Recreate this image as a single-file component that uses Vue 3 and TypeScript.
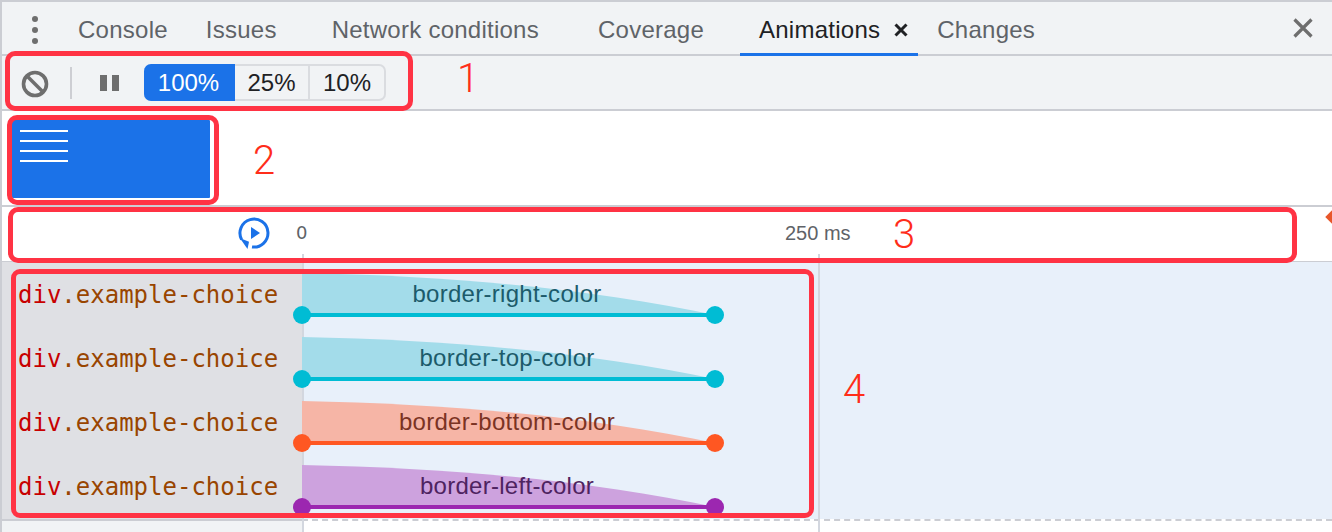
<script setup lang="ts">
interface Tab { label: string; spacer?: number; active?: boolean }
interface Row { prop: string; line: string; fill: string; text: string }

const tabs: Tab[] = [
  { label: 'Console' },
  { label: 'Issues', spacer: 17 },
  { label: 'Network conditions', spacer: 21 },
  { label: 'Coverage', spacer: 17 },
  { label: 'Animations', active: true },
  { label: 'Changes' },
]
const rates = ['100%', '25%', '10%']
const rows: Row[] = [
  { prop: 'border-right-color', line: '#00bcd4', fill: '#a3dcea', text: '#1c5b6b' },
  { prop: 'border-top-color', line: '#00bcd4', fill: '#a3dcea', text: '#1c5b6b' },
  { prop: 'border-bottom-color', line: '#ff5722', fill: '#f6b5a6', text: '#7b3323' },
  { prop: 'border-left-color', line: '#9c27b0', fill: '#cda2de', text: '#4e2360' },
]
const thumbLines = [0, 1, 2, 3]
</script>

<template>
  <div class="devtools">
    <nav class="tabbar">
      <svg class="kebab" width="10" height="30" viewBox="0 0 10 30">
        <circle cx="5" cy="4" r="3" />
        <circle cx="5" cy="15" r="3" />
        <circle cx="5" cy="26" r="3" />
      </svg>
      <div v-for="t in tabs" :key="t.label" class="tab" :class="{ active: t.active }">
        <span>{{ t.label }}</span>
        <span v-if="t.spacer" :style="{ width: t.spacer + 'px' }"></span>
        <svg v-if="t.active" class="tab-x" width="14" height="14" viewBox="0 0 14 14">
          <path d="M1.5 1.5 12.5 12.5M12.5 1.5 1.5 12.5" />
        </svg>
      </div>
      <svg class="close" width="20" height="20" viewBox="0 0 20 20">
        <path d="M1.5 1.5 18.5 18.5M18.5 1.5 1.5 18.5" />
      </svg>
    </nav>

    <div class="toolbar">
      <svg class="clear" width="28" height="28" viewBox="0 0 28 28">
        <circle cx="14" cy="14" r="11.5" />
        <path d="M6 6 22 22" />
      </svg>
      <span class="sep"></span>
      <span class="pause"><i></i><i></i></span>
      <div class="rates">
        <button v-for="(r, i) in rates" :key="r" class="rate" :class="{ on: i === 0 }">{{ r }}</button>
      </div>
    </div>

    <section class="overview">
      <div class="thumb">
        <div class="thumb-lines">
          <span v-for="n in thumbLines" :key="n"></span>
        </div>
      </div>
    </section>

    <header class="ruler">
      <div class="ruler-left">
        <svg class="replay" width="34" height="34" viewBox="0 0 34 34">
          <path class="arc" d="M15 30.9A14 14 0 1 0 4.6 23.6" />
          <path class="solid" d="M2.8 22 12 25.8 10.5 33Z" />
          <path class="solid" d="M14 11 23 17 14 23Z" />
        </svg>
      </div>
      <div class="ticks">
        <span class="tick-zero">0</span>
        <span class="tick-250">250 ms</span>
      </div>
      <span class="handle"></span>
    </header>

    <div class="rows">
      <span class="grid-line first"></span>
      <span class="grid-line second"></span>
      <div v-for="r in rows" :key="r.prop" class="row">
        <div class="node"><span class="tag">div</span><span class="cls">.example-choice</span></div>
        <div class="track">
          <svg class="curve" width="434" height="64" viewBox="-10 0 434 64">
            <path :fill="r.fill" d="M0 11C160 14 300 29 413 53H0Z" />
            <path :stroke="r.line" stroke-width="4" d="M0 53H413" />
            <circle :fill="r.line" cx="0" cy="53" r="9" />
            <circle :fill="r.line" cx="413" cy="53" r="9" />
          </svg>
          <span class="prop" :style="{ color: r.text }">{{ r.prop }}</span>
        </div>
      </div>
    </div>

    <footer class="foot">
      <span class="foot-left"></span>
      <span class="foot-right"></span>
    </footer>

    <span class="mark m1"></span>
    <span class="mark m2"></span>
    <span class="mark m3"></span>
    <span class="mark m4"></span>
    <span class="num n1">1</span>
    <span class="num n2">2</span>
    <span class="num n3">3</span>
    <span class="num n4">4</span>
  </div>
</template>

<style>
html, body { margin: 0; padding: 0; background: #fff; }
</style>

<style scoped>
.devtools {
  position: relative;
  width: 1332px;
  height: 532px;
  overflow: hidden;
  box-sizing: border-box;
  border-left: 2px solid #cbcdd3;
  border-top: 2px solid #cbcdd3;
  font-family: "Liberation Sans", Arial, sans-serif;
  background: #fff;
  display: flex;
  flex-direction: column;
}
.tabbar {
  height: 52px;
  flex: none;
  display: flex;
  align-items: stretch;
  background: #f1f3f5;
  border-bottom: 2px solid #cbcdd3;
  font-size: 24px;
  letter-spacing: 0.25px;
  color: #5f6368;
}
.kebab { margin: 13px 19px 0 28px; fill: #6e6e6e; flex: none; }
.tab {
  position: relative;
  display: flex;
  align-items: center;
  padding: 4px 19px 0;
}
.tab.active { color: #202124; }
.tab.active::after {
  content: "";
  position: absolute;
  left: 0;
  right: 0;
  bottom: -2px;
  height: 3px;
  background: #1b72e8;
}
.tab-x { margin-left: 14px; fill: none; stroke: #202124; stroke-width: 3; margin-right: -9px; }
.close { margin: 16px 19px 0 auto; fill: none; stroke: #6e6e6e; stroke-width: 3.2; }
.toolbar {
  height: 53px;
  flex: none;
  display: flex;
  align-items: center;
  background: #f1f3f5;
  border-bottom: 2px solid #cbcdd3;
}
.clear { margin-left: 19px; fill: none; stroke: #6e6e6e; stroke-width: 3.6; margin-top: 2px; flex: none; }
.sep { width: 2px; height: 32px; background: #cdced3; margin: 0 0 0 21px; }
.pause { display: flex; gap: 5px; margin-left: 28px; }
.pause i { display: block; width: 7px; height: 16px; background: #6e6e6e; }
.rates {
  display: flex;
  height: 37px;
  margin-left: 25px;
  border-radius: 7px;
  box-sizing: border-box;
}
.rate {
  font: inherit;
  font-size: 24px;
  color: #202124;
  background: #f1f3f5;
  border: 2px solid #dadce0;
  border-left: none;
  padding: 0;
  margin: 0;
  width: 75px;
  box-sizing: border-box;
}
.rate:nth-child(3) { width: 76px; border-radius: 0 7px 7px 0; }
.rate.on {
  width: 91px;
  background: #1b72e8;
  border-color: #1b72e8;
  color: #fff;
  border-radius: 7px 0 0 7px;
}
.overview {
  height: 94px;
  flex: none;
  padding: 9px 0 0 10px;
  box-sizing: border-box;
}
.thumb {
  width: 198px;
  height: 78px;
  background: #1b72e8;
  box-sizing: border-box;
  padding: 10px 0 0 8px;
  border-radius: 1px;
}
.thumb-lines { width: 48px; display: flex; flex-direction: column; }
.thumb-lines span { display: block; height: 2px; background: #fff; margin-bottom: 8px; }
.ruler {
  position: relative;
  height: 54px;
  flex: none;
  border-top: 2px solid #cbcdd3;
  border-bottom: 1px solid #cbcdd3;
  display: flex;
  background: #fff;
}
.ruler-left {
  width: 300px;
  flex: none;
  display: flex;
  align-items: center;
  justify-content: flex-end;
  box-sizing: border-box;
  padding-right: 31px;
}
.replay { margin-top: -2px; }
.replay .arc { fill: none; stroke: #1b72e8; stroke-width: 3; }
.replay .solid { fill: #1b72e8; }
.ticks { position: relative; flex: 1; font-size: 20px; color: #5f6368; }
.tick-zero { position: absolute; left: -6px; top: 15px; font-family: "DejaVu Sans", sans-serif; font-size: 18px; }
.tick-250 { position: absolute; left: 483px; top: 15px; }
.handle {
  position: absolute;
  right: -7px;
  top: 3px;
  width: 14px;
  height: 14px;
  background: #e8562a;
  transform: rotate(45deg) scale(0.68);
}
.rows { position: relative; height: 257px; flex: none; background: #e8f0fa; }
.grid-line {
  position: absolute;
  top: -8px;
  bottom: -14px;
  width: 2px;
  background: #d3d7df;
  z-index: 1;
}
.grid-line.first { left: 300px; }
.grid-line.second { left: 816px; }
.row { height: 64px; display: flex; position: relative; }
.row:last-of-type { height: 65px; }
.node {
  width: 300px;
  flex: none;
  background: #dfe0e4;
  box-sizing: border-box;
  padding: 18px 0 0 16px;
  font-family: "DejaVu Sans Mono", monospace;
  font-size: 24px;
  line-height: 30px;
  white-space: nowrap;
}
.tag { color: #c80000; }
.cls { color: #994500; }
.track { position: relative; flex: 1; }
.curve { position: absolute; left: -10px; top: 0; z-index: 2; }
.prop {
  position: absolute;
  left: 0;
  width: 410px;
  top: 18px;
  text-align: center;
  font-size: 24px;
  line-height: 28px;
  z-index: 3;
  letter-spacing: 0.28px;
}
.foot { flex: 1; display: flex; min-height: 0; }
.foot-left { width: 300px; background: #f1f3f5; border-top: 2px solid #cbcdd3; box-sizing: border-box; }
.foot-right { flex: 1; border-top: 2px dashed #cbcdd3; box-sizing: border-box; background: #fff; }
.mark {
  position: absolute;
  border: 5px solid #ff3344;
  border-radius: 10px;
  box-sizing: border-box;
  z-index: 5;
}
.m1 { left: 3px; top: 49px; width: 408px; height: 60px; }
.m2 { left: 5px; top: 113px; width: 212px; height: 90px; }
.m3 { left: 6px; top: 205px; width: 1289px; height: 56px; }
.m4 { left: 9px; top: 267px; width: 803px; height: 249px; border-radius: 9px; }
.num {
  position: absolute;
  z-index: 5;
  font-family: Roboto, "Liberation Sans", sans-serif;
  font-weight: 300;
  font-size: 40px;
  line-height: 40px;
  color: #ff2d1a;
}
.n1 { left: 455px; top: 57px; }
.n2 { left: 251px; top: 139px; }
.n3 { left: 891px; top: 213px; }
.n4 { left: 841px; top: 368px; }
</style>
